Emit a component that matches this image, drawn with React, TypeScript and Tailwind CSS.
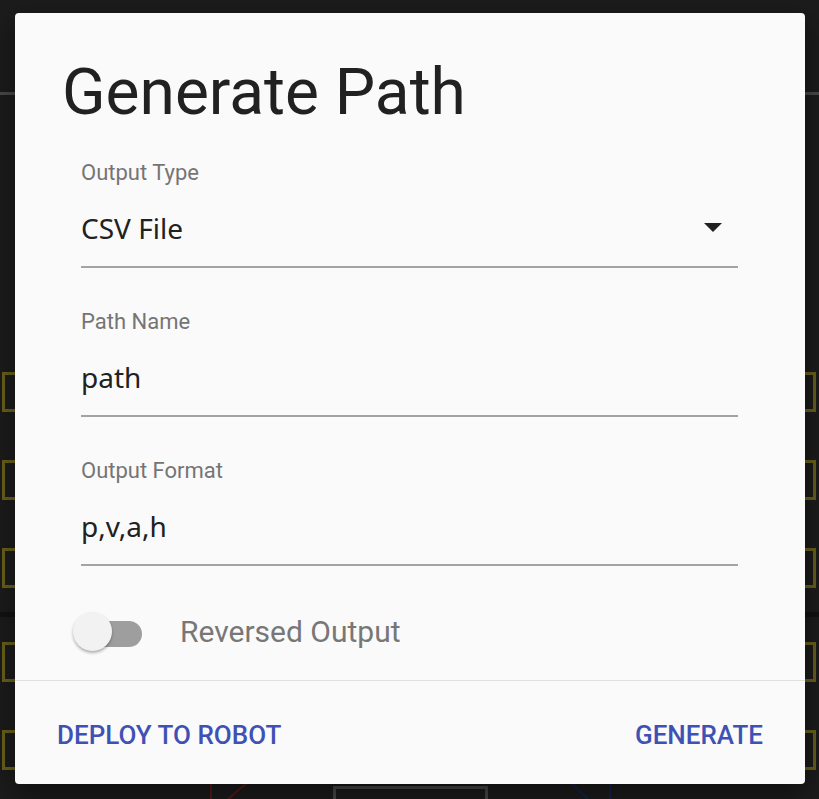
const leftBoxes = [372, 460, 548, 642, 730];

function Backdrop() {
    return (
        <div className="pointer-events-none absolute inset-0">
            {/* grid line behind the dialog */}
            <div className="absolute left-0 right-0 top-[92px] h-[3px] bg-[#4a4a4a]" />
            <div className="absolute left-0 right-0 top-[612px] h-[5px] bg-[#121212]" />
            {leftBoxes.map((y) => (
                <div
                    key={`l${y}`}
                    className="absolute left-[2px] h-[40px] w-[40px] border-[3px] border-[#6b6219]"
                    style={{ top: y }}
                />
            ))}
            {leftBoxes.map((y) => (
                <div
                    key={`r${y}`}
                    className="absolute left-[776px] h-[40px] w-[40px] border-[3px] border-[#6b6219]"
                    style={{ top: y }}
                />
            ))}
            {/* field elements peeking out at the bottom */}
            <div className="absolute left-[333px] top-[786px] h-[40px] w-[155px] border-[3px] border-[#4a4a4a]" />
            <svg className="absolute left-0 top-[780px]" width="819" height="19">
                <line x1="211" y1="0" x2="211" y2="19" stroke="#5a1a1a" strokeWidth="2" />
                <line x1="248" y1="2" x2="228" y2="19" stroke="#5a1a1a" strokeWidth="2" />
                <line x1="570" y1="2" x2="588" y2="19" stroke="#14224d" strokeWidth="2" />
                <line x1="610" y1="0" x2="610" y2="19" stroke="#14224d" strokeWidth="2" />
            </svg>
        </div>
    );
}

interface FieldProps {
    label: string;
    value: string;
    select?: boolean;
    first?: boolean;
}

function Field({ label, value, select, first }: FieldProps) {
    return (
        <div className={first ? '' : 'mt-[42px]'}>
            <div className="text-[22px] leading-[24px] text-[#757575]">{label}</div>
            <div className="flex items-center justify-between pb-[20px] pt-[25px]">
                <span className="font-['Noto_Sans',sans-serif] text-[28px] leading-[36px] text-[#212121]">
                    {value}
                </span>
                {select && (
                    <svg width="18" height="10" viewBox="0 0 18 10" className="mr-[16px]">
                        <path d="M0 0 L18 0 L9 9 Z" fill="#212121" />
                    </svg>
                )}
            </div>
            <div className="h-[2px] bg-[#a3a3a3]" />
        </div>
    );
}

function Switch() {
    return (
        <div className="relative h-[40px] w-[70px] shrink-0">
            <div className="absolute left-[4px] top-[9px] h-[26px] w-[65px] rounded-full bg-[#9e9e9e]" />
            <div className="absolute left-0 top-0 h-[39px] w-[39px] rounded-full bg-[#f2f2f2] shadow-[0_2px_3px_rgba(0,0,0,0.3)]" />
        </div>
    );
}

export default function App() {
    return (
        <div className="relative h-[799px] w-full overflow-hidden bg-[#1c1c1c] font-['Roboto',sans-serif]">
            <Backdrop />
            <div className="relative pl-[15px] pt-[13px]">
                <div className="flex h-[771px] w-[790px] flex-col rounded-[4px] bg-[#fafafa] shadow-[0_10px_30px_rgba(0,0,0,0.5)]">
                    {/* Title */}
                    <h1 className="pl-[47px] pt-[48px] text-[64px] leading-[64px] text-[#212121]">
                        Generate Path
                    </h1>

                    {/* Fields */}
                    <div className="mt-[36px] pl-[66px] pr-[67px]">
                        <Field label="Output Type" value="CSV File" select first />
                        <Field label="Path Name" value="path" />
                        <Field label="Output Format" value="p,v,a,h" />
                    </div>

                    {/* Reversed toggle */}
                    <div className="mt-[46px] flex items-center pl-[58px]">
                        <Switch />
                        <span className="ml-[37px] text-[30px] leading-[36px] text-[#777777]">
                            Reversed Output
                        </span>
                    </div>

                    <div className="mt-[28px] h-px bg-[#e0e0e0]" />

                    {/* Actions */}
                    <div className="flex items-center justify-between px-[42px] pt-[36px]">
                        <button className="text-[26px] font-medium uppercase leading-[36px] text-[#3f51b5]">
                            Deploy to Robot
                        </button>
                        <button className="text-[26px] font-medium uppercase leading-[36px] text-[#3f51b5]">
                            Generate
                        </button>
                    </div>
                </div>
            </div>
        </div>
    );
}
